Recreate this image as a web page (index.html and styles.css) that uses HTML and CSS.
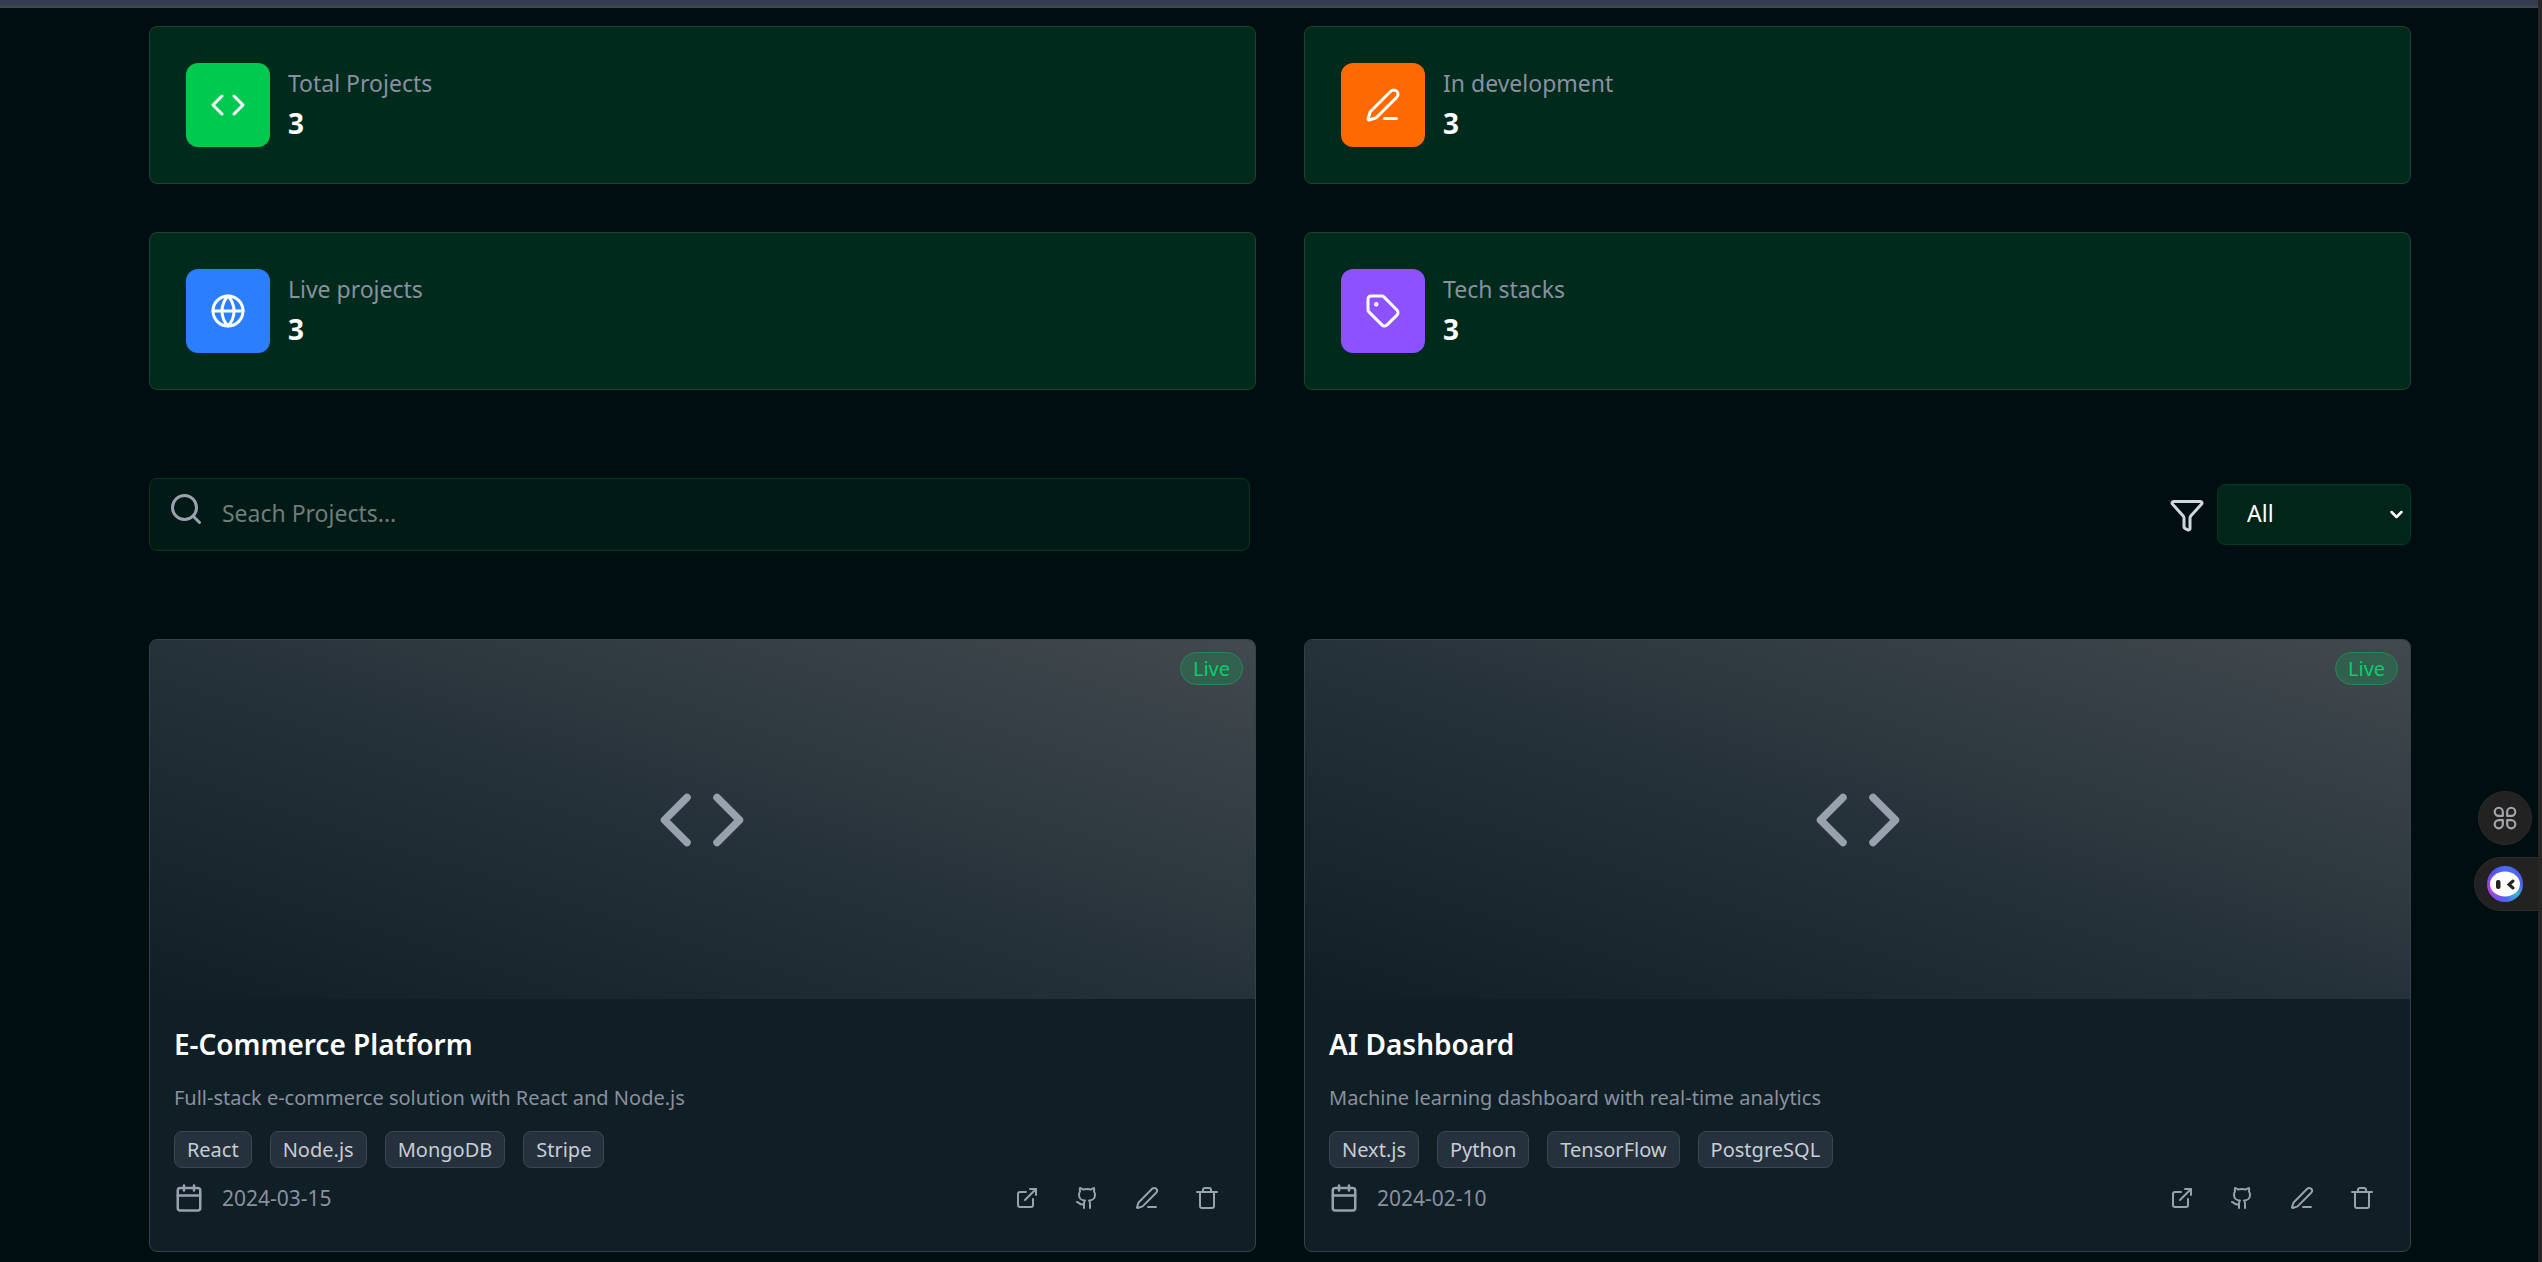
FILE: index.html
```html
<!DOCTYPE html>
<html lang="en">
<head>
<meta charset="utf-8">
<title>Projects</title>
<link rel="stylesheet" href="styles.css">
</head>
<body>
<svg class="sprite" aria-hidden="true">
  <symbol id="code" viewBox="0 0 24 24"><path d="m16 18 6-6-6-6"/><path d="m8 6-6 6 6 6"/></symbol>
  <symbol id="pen" viewBox="0 0 24 24"><path d="M13 21h8"/><path d="M21.174 6.812a1 1 0 0 0-3.986-3.987L3.842 16.174a2 2 0 0 0-.5.83l-1.321 4.352a.5.5 0 0 0 .623.622l4.353-1.32a2 2 0 0 0 .83-.497z"/></symbol>
  <symbol id="globe" viewBox="0 0 24 24"><circle cx="12" cy="12" r="10"/><path d="M12 2a14.5 14.5 0 0 0 0 20 14.5 14.5 0 0 0 0-20"/><path d="M2 12h20"/></symbol>
  <symbol id="tag" viewBox="0 0 24 24"><path d="M12.586 2.586A2 2 0 0 0 11.172 2H4a2 2 0 0 0-2 2v7.172a2 2 0 0 0 .586 1.414l8.704 8.704a2.426 2.426 0 0 0 3.42 0l6.58-6.58a2.426 2.426 0 0 0 0-3.42z"/><circle cx="7.5" cy="7.5" r=".5" fill="currentColor"/></symbol>
  <symbol id="search" viewBox="0 0 24 24"><path d="m21 21-4.34-4.34"/><circle cx="11" cy="11" r="8"/></symbol>
  <symbol id="funnel" viewBox="0 0 24 24"><path d="M10 20a1 1 0 0 0 .553.895l2 1A1 1 0 0 0 14 21v-7a2 2 0 0 1 .517-1.341L21.74 4.67A1 1 0 0 0 21 3H3a1 1 0 0 0-.742 1.67l7.225 7.989A2 2 0 0 1 10 14z"/></symbol>
  <symbol id="calendar" viewBox="0 0 24 24"><path d="M8 2v4"/><path d="M16 2v4"/><rect width="18" height="18" x="3" y="4" rx="2"/><path d="M3 10h18"/></symbol>
  <symbol id="external" viewBox="0 0 24 24"><path d="M15 3h6v6"/><path d="M10 14 21 3"/><path d="M18 13v6a2 2 0 0 1-2 2H5a2 2 0 0 1-2-2V8a2 2 0 0 1 2-2h6"/></symbol>
  <symbol id="github" viewBox="0 0 24 24"><path d="M15 22v-4a4.8 4.8 0 0 0-1-3.5c3 0 6-2 6-5.5.08-1.25-.27-2.48-1-3.5.28-1.15.28-2.35 0-3.5 0 0-1 0-3 1.5-2.64-.5-5.36-.5-8 0C6 2 5 2 5 2c-.3 1.15-.3 2.35 0 3.5A5.403 5.403 0 0 0 4 9c0 3.5 3 5.5 6 5.5-.39.49-.68 1.05-.85 1.65-.17.6-.22 1.23-.15 1.85v4"/><path d="M9 18c-4.51 2-5-2-7-2"/></symbol>
  <symbol id="trash" viewBox="0 0 24 24"><path d="M19 6v14a2 2 0 0 1-2 2H7a2 2 0 0 1-2-2V6"/><path d="M2 6h20"/><path d="M8 6V4a2 2 0 0 1 2-2h4a2 2 0 0 1 2 2v2"/></symbol>
  <symbol id="chevron" viewBox="0 0 24 24"><path d="m4 8 8 8 8-8"/></symbol>
</svg>

<main class="page">
  <section class="grid" aria-label="Statistics">
    <div class="stat">
      <span class="stat-icon green"><svg class="icon"><use href="#code"/></svg></span>
      <div><p class="stat-label">Total Projects</p><p class="stat-value">3</p></div>
    </div>
    <div class="stat">
      <span class="stat-icon orange"><svg class="icon"><use href="#pen"/></svg></span>
      <div><p class="stat-label">In development</p><p class="stat-value">3</p></div>
    </div>
    <div class="stat">
      <span class="stat-icon blue"><svg class="icon"><use href="#globe"/></svg></span>
      <div><p class="stat-label">Live projects</p><p class="stat-value">3</p></div>
    </div>
    <div class="stat">
      <span class="stat-icon purple"><svg class="icon"><use href="#tag"/></svg></span>
      <div><p class="stat-label">Tech stacks</p><p class="stat-value">3</p></div>
    </div>
  </section>

  <form class="toolbar">
    <div class="search">
      <svg class="icon search-icon"><use href="#search"/></svg>
      <input class="search-input" type="text" placeholder="Seach Projects..." aria-label="Search projects">
    </div>
    <div class="filter">
      <label for="status" aria-label="Filter by status"><svg class="icon"><use href="#funnel"/></svg></label>
      <div class="select">
        <select id="status"><option>All</option><option>Live</option><option>In development</option></select>
        <svg class="icon select-arrow"><use href="#chevron"/></svg>
      </div>
    </div>
  </form>

  <section class="grid" aria-label="Projects">
    <article class="project">
      <div class="cover"><svg class="icon cover-icon"><use href="#code"/></svg><span class="badge">Live</span></div>
      <div class="project-body">
        <h2>E-Commerce Platform</h2>
        <p class="description">Full-stack e-commerce solution with React and Node.js</p>
        <ul class="tags"><li>React</li><li>Node.js</li><li>MongoDB</li><li>Stripe</li></ul>
        <div class="meta">
          <svg class="icon calendar"><use href="#calendar"/></svg>
          <time datetime="2024-03-15">2024-03-15</time>
          <div class="actions">
            <a href="#live" aria-label="Open project"><svg class="icon"><use href="#external"/></svg></a>
            <a href="#source" aria-label="Source code"><svg class="icon"><use href="#github"/></svg></a>
            <button type="button" aria-label="Edit"><svg class="icon"><use href="#pen"/></svg></button>
            <button type="button" aria-label="Delete"><svg class="icon"><use href="#trash"/></svg></button>
          </div>
        </div>
      </div>
    </article>
    <article class="project">
      <div class="cover"><svg class="icon cover-icon"><use href="#code"/></svg><span class="badge">Live</span></div>
      <div class="project-body">
        <h2>AI Dashboard</h2>
        <p class="description">Machine learning dashboard with real-time analytics</p>
        <ul class="tags"><li>Next.js</li><li>Python</li><li>TensorFlow</li><li>PostgreSQL</li></ul>
        <div class="meta">
          <svg class="icon calendar"><use href="#calendar"/></svg>
          <time datetime="2024-02-10">2024-02-10</time>
          <div class="actions">
            <a href="#live" aria-label="Open project"><svg class="icon"><use href="#external"/></svg></a>
            <a href="#source" aria-label="Source code"><svg class="icon"><use href="#github"/></svg></a>
            <button type="button" aria-label="Edit"><svg class="icon"><use href="#pen"/></svg></button>
            <button type="button" aria-label="Delete"><svg class="icon"><use href="#trash"/></svg></button>
          </div>
        </div>
      </div>
    </article>
  </section>
</main>

<aside class="dock">
  <button class="dock-round" type="button" aria-label="Apps">
    <svg class="icon petals" viewBox="0 0 24 24"><path d="M10 10H6.250A3.750 3.750 0 1 1 10 6.250z"/><path d="M14 10V6.250A3.750 3.750 0 1 1 17.750 10z"/><path d="M10 14v3.750A3.750 3.750 0 1 1 6.250 14z"/><path d="M14 14h3.750A3.750 3.750 0 1 1 14 17.750z"/></svg>
  </button>
  <button class="dock-tab" type="button" aria-label="Assistant">
    <span class="bot">
      <svg class="bot-face" viewBox="0 0 30 26"><ellipse cx="15" cy="13" rx="15" ry="12.500" fill="#fff"/><rect x="6" y="9" width="4.500" height="9" rx="2" fill="#222"/><path d="m23 10-4 3.500 4 3.500" fill="none" stroke="#222" stroke-width="3" stroke-linecap="round"/></svg>
    </span>
  </button>
</aside>
</body>
</html>
```
FILE: styles.css
```css
* { box-sizing: border-box; }

body {
  margin: 0;
  min-height: 100vh;
  border-right: 4px solid #292625;
  background: #000e11;
  color: #fff;
  font-family: "Noto Sans", sans-serif;
  font-size: 23px;
  line-height: 36px;
}

body::before {
  content: "";
  display: block;
  height: 6px;
  margin-right: -4px;
  border-bottom: 2px solid #45464c;
  background: #343c4e;
}

p, h2, ul { margin: 0; padding: 0; }

.sprite { position: absolute; width: 0; height: 0; }

.icon {
  display: block;
  flex: none;
  width: 36px;
  height: 36px;
  fill: none;
  stroke: currentColor;
  stroke-width: 2;
  stroke-linecap: round;
  stroke-linejoin: round;
}

.page {
  display: flex;
  flex-direction: column;
  gap: 88px;
  padding: 18px 5% 8px;
  padding-left: calc(5% + 22px);
}

.grid {
  display: grid;
  grid-template-columns: 1fr 1fr;
  gap: 48px;
}

.stat {
  display: flex;
  align-items: center;
  gap: 18px;
  padding: 36px;
  border: 1px solid #1f4234;
  border-radius: 8px;
  background: #002a1c;
}

.stat-icon { padding: 24px; border-radius: 12px; }
.green { background: #00c950; }
.orange { background: #ff6900; }
.blue { background: #2b7fff; }
.purple { background: #8e51ff; }

.stat-label { color: #8990a0; }
.stat-value { font-size: 28px; font-weight: 700; line-height: 44px; }

.toolbar {
  display: flex;
  align-items: center;
  justify-content: space-between;
}

.search { position: relative; flex: 0 1 1101px; }

.search-icon {
  position: absolute;
  top: 13px;
  left: 19px;
  color: #99a1af;
}

.search-input {
  display: block;
  width: 100%;
  height: 73px;
  padding: 0 24px 3px 72px;
  border: 1px solid #013a20;
  border-radius: 8px;
  background: #011a16;
  color: #fff;
  font: inherit;
}

.search-input::placeholder { color: #6f7c79; opacity: 1; }

.filter {
  display: flex;
  align-items: center;
  gap: 12px;
  color: #d1d5dc;
}

.select { position: relative; }

.select select {
  display: block;
  width: 194px;
  height: 61px;
  padding: 0 29px 3px;
  appearance: none;
  border: 1px solid #013a20;
  border-radius: 8px;
  background: #022519;
  color: #fff;
  font: inherit;
}

.select-arrow {
  position: absolute;
  top: 23px;
  right: 7px;
  width: 15px;
  height: 15px;
  color: #fff;
  stroke-width: 4;
  pointer-events: none;
}

.project {
  overflow: hidden;
  border: 1px solid #364147;
  border-radius: 8px;
  background: #101e25;
}

.cover {
  position: relative;
  display: grid;
  place-items: center;
  height: 359px;
  background: linear-gradient(to top right, #101e25, #26323a, #42494e);
}

.cover-icon { width: 90px; height: 90px; color: #99a1af; }

.badge {
  position: absolute;
  top: 12px;
  right: 12px;
  padding: 0 12px;
  border: 1px solid #228a57;
  border-radius: 17px;
  background: #32604f;
  color: #05cf6a;
  font-size: 20px;
  line-height: 31px;
}

.project-body { padding: 24px 24px 29px; }

h2 { font-size: 28px; font-weight: 600; line-height: 42px; }

.description {
  margin-top: 18px;
  color: #8990a0;
  font-size: 20px;
  line-height: 30px;
}

.tags {
  display: flex;
  gap: 18px;
  margin-top: 18px;
  list-style: none;
}

.tags li {
  padding: 3px 12px;
  border: 1px solid #3a4650;
  border-radius: 8px;
  background: #25313c;
  color: #c8ccd4;
  font-size: 20px;
  line-height: 29px;
}

.meta {
  display: flex;
  align-items: center;
  gap: 18px;
  margin-top: 6px;
  color: #99a1af;
  font-size: 21px;
}

.meta time { color: #8990a0; }

.calendar { width: 30px; height: 30px; }

.actions { display: flex; gap: 12px; margin-left: auto; }

.actions a,
.actions button {
  padding: 12px;
  border: 0;
  background: none;
  color: inherit;
}

.actions .icon { width: 24px; height: 24px; }

.dock {
  position: fixed;
  top: 791px;
  right: 4px;
  display: flex;
  flex-direction: column;
  align-items: flex-end;
  gap: 12px;
}

.dock button {
  display: flex;
  align-items: center;
  height: 54px;
  padding: 0;
  border: 1px solid #2c2c2c;
  background: #222;
  color: #a5a5ab;
}

.dock .dock-round {
  justify-content: center;
  width: 54px;
  margin-right: 6px;
  border-radius: 50%;
}

.petals { width: 26px; height: 26px; }

.dock .dock-tab {
  width: 64px;
  padding-left: 12px;
  border-right: 0;
  border-radius: 27px 0 0 27px;
}

.bot {
  display: grid;
  place-items: center;
  width: 36px;
  height: 36px;
  border-radius: 50%;
  background: conic-gradient(#4a6cf7, #4f5cf0 90deg, #35b5dc 130deg, #5560f0 180deg, #b040e8 250deg, #5a50f0 310deg, #4a6cf7);
}

.bot-face { width: 30px; height: 26px; }
```
